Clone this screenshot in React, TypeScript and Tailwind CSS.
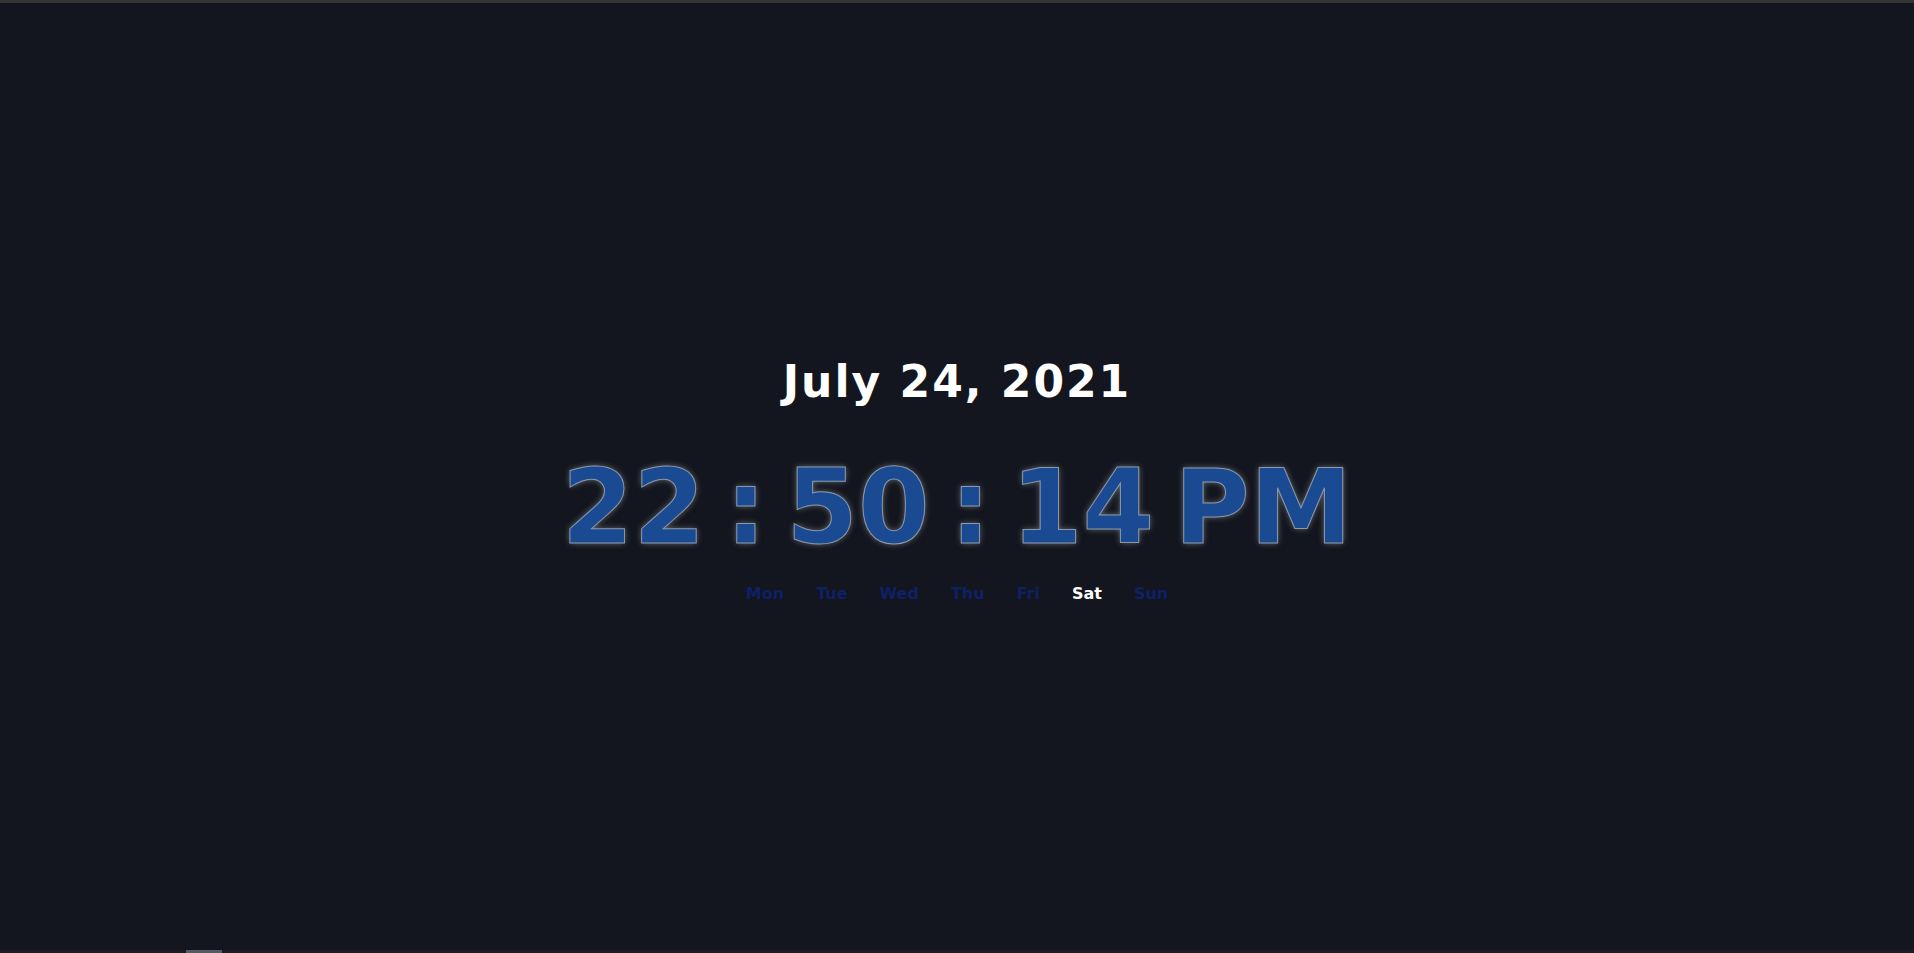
import React from "react";

const days = ["Mon", "Tue", "Wed", "Thu", "Fri", "Sat", "Sun"];
const active = "Sat";

export default function App() {
  return (
    <div className="flex h-screen w-full flex-col bg-[#13161e] font-['DejaVu_Sans',Verdana,sans-serif]">
      <div className="h-[3px] w-full shrink-0 bg-[#343434]" />
      <main className="flex flex-1 flex-col items-center justify-center pt-[8px]">
        <div className="text-[44px] font-bold leading-none tracking-[2px] text-white">
          July 24, 2021
        </div>
        <div className="mt-[52px] flex items-center gap-5 text-[103px] font-bold leading-none text-[#1a4a91] [-webkit-text-stroke:1px_#8a98ae] [text-shadow:0_0_6px_rgba(170,170,170,0.6)]">
          <span>22</span>
          <span>:</span>
          <span>50</span>
          <span>:</span>
          <span>14</span>
          <span>PM</span>
        </div>
        <div className="mt-[27px] flex gap-8 text-[16px] font-bold leading-none">
          {days.map((d) => (
            <span
              key={d}
              className={d === active ? "text-white" : "text-[#0e2066]"}
            >
              {d}
            </span>
          ))}
        </div>
      </main>
      <div className="flex h-[3px] w-full shrink-0 bg-[#1f1a20]">
        <div className="w-[186px]" />
        <div className="w-[36px] bg-[#5a5860]" />
      </div>
    </div>
  );
}
